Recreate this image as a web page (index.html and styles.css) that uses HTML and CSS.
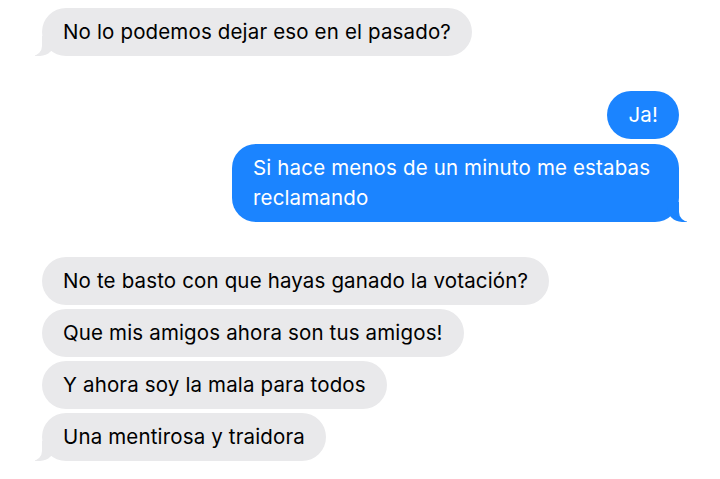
FILE: index.html
```html
<html>
<head>
    <title>Mensajes</title>
    <link rel="stylesheet" href="styles.css">
</head>
<body>
    <div class="chat">
        <div class="group them">
            <div class="bubble tail">No lo podemos dejar eso en el pasado?</div>
        </div>
        <div class="group me">
            <div class="bubble">Ja!</div>
            <div class="bubble tail">Si hace menos de un minuto me estabas reclamando</div>
        </div>
        <div class="group them">
            <div class="bubble">No te basto con que hayas ganado la votación?</div>
            <div class="bubble">Que mis amigos ahora son tus amigos!</div>
            <div class="bubble">Y ahora soy la mala para todos</div>
            <div class="bubble tail">Una mentirosa y traidora</div>
        </div>
    </div>
</body>
</html>
```

FILE: styles.css
```css
body {
    margin: 0;
    background: #fff;
    font-family: "Inter", "Liberation Sans", sans-serif;
}
.chat {
    display: flex;
    flex-direction: column;
    gap: 35px;
    padding: 8px 41px 0 42px;
}
.group {
    display: flex;
    flex-direction: column;
    gap: 4px;
}
.them {
    align-items: flex-start;
}
.me {
    align-items: flex-end;
    gap: 5px;
}
.bubble {
    position: relative;
    padding: 9px 21px;
    border-radius: 24px;
    font-size: 20.5px;
    letter-spacing: 0.15px;
    line-height: 30px;
}
.them .bubble {
    max-width: 540px;
    background: #e9e9eb;
    color: #000;
}
.me .bubble {
    max-width: 405px;
    background: #1b84ff;
    color: #fff;
}
.tail::before,
.tail::after {
    content: "";
    position: absolute;
    bottom: 0;
    height: 20px;
}
.them .tail::before {
    left: -7px;
    width: 20px;
    background: #e9e9eb;
    border-bottom-right-radius: 15px;
}
.them .tail::after {
    left: -10px;
    width: 10px;
    background: #fff;
    border-bottom-right-radius: 10px;
}
.me .tail::before {
    right: -8px;
    width: 20px;
    background: #1b84ff;
    border-bottom-left-radius: 15px;
}
.me .tail::after {
    right: -10px;
    width: 10px;
    background: #fff;
    border-bottom-left-radius: 10px;
}
```
